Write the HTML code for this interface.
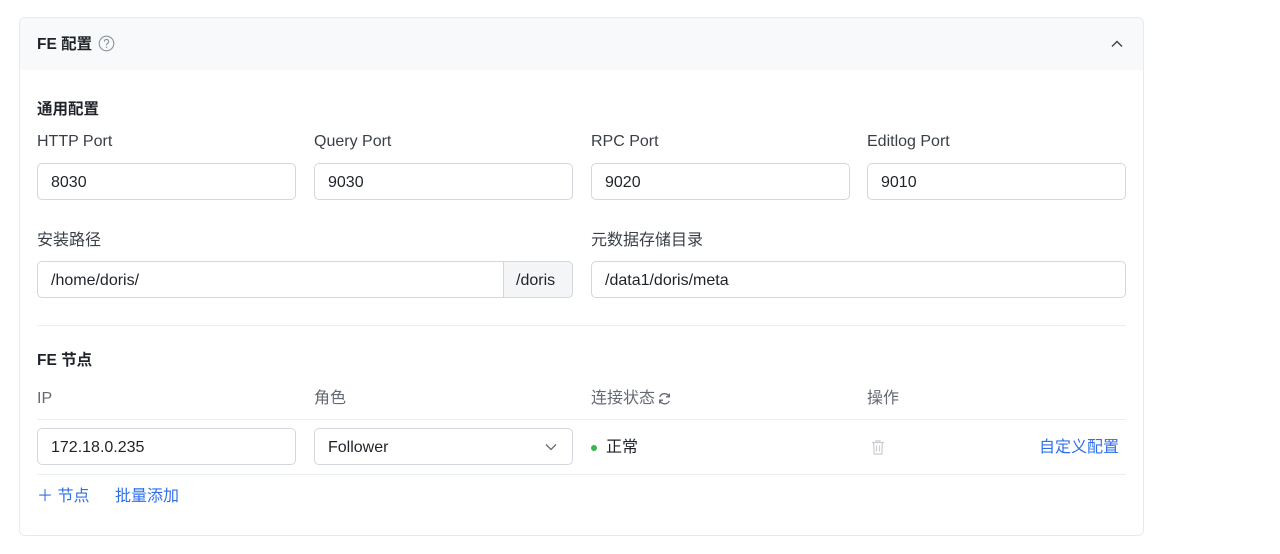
<!DOCTYPE html><html><head><meta charset="utf-8"><style>
*{box-sizing:border-box;margin:0;padding:0}
body{width:1280px;height:554px;background:#fff;font-family:"Liberation Sans","Noto Sans CJK SC",sans-serif;color:#1f2329;position:relative;overflow:hidden}
.a{position:absolute;line-height:20px}
.card{left:19px;top:17px;width:1125px;height:519px;border:1px solid #e8eaee;border-radius:6px;overflow:hidden}
.hd{left:0;top:0;width:100%;height:52px;background:#f8f9fb}
.t{font-size:15.5px;font-weight:bold;color:#1f2329}
.lb{font-size:16px;color:#3a3f47}
.in{height:37px;border:1px solid #d3d7de;border-radius:5px;font-size:16px;padding-left:13px;line-height:37px;color:#1f2329;background:#fff}
.ln{height:1px;background:#eceef2}
.blue{color:#2f6fed;font-size:16px}
</style></head><body>
<div class="a card">
<div class="a hd"></div>
</div>
<div class="a t" style="left:37px;top:35px">FE 配置</div>
<svg class="a" style="left:98px;top:35px" width="17" height="17" viewBox="0 0 17 17"><circle cx="8.5" cy="8.5" r="7.3" fill="none" stroke="#8a919c" stroke-width="1.1"/><path d="M6.4 6.6a2.1 2.1 0 1 1 2.9 1.9c-.6.3-.8.7-.8 1.3v.6" fill="none" stroke="#8a919c" stroke-width="1.1"/><circle cx="8.5" cy="12.3" r=".7" fill="#8a919c"/></svg>
<svg class="a" style="left:1110px;top:38px" width="14" height="12" viewBox="0 0 14 12"><path d="M2 8.5l5-5 5 5" fill="none" stroke="#3a3f47" stroke-width="1.4"/></svg>
<div class="a t" style="left:37px;top:100px">通用配置</div>
<div class="a lb" style="left:37px;top:132px">HTTP Port</div>
<div class="a lb" style="left:314px;top:132px">Query Port</div>
<div class="a lb" style="left:591px;top:132px">RPC Port</div>
<div class="a lb" style="left:867px;top:132px">Editlog Port</div>
<div class="a in" style="left:37px;top:163px;width:259px">8030</div>
<div class="a in" style="left:314px;top:163px;width:259px">9030</div>
<div class="a in" style="left:591px;top:163px;width:259px">9020</div>
<div class="a in" style="left:867px;top:163px;width:259px">9010</div>
<div class="a lb" style="left:37px;top:231px">安装路径</div>
<div class="a lb" style="left:591px;top:231px">元数据存储目录</div>
<div class="a in" style="left:37px;top:261px;width:536px">/home/doris/</div>
<div class="a in" style="left:503px;top:261px;width:70px;background:#f4f5f7;border-radius:0 5px 5px 0;padding-left:12px">/doris</div>
<div class="a in" style="left:591px;top:261px;width:535px">/data1/doris/meta</div>
<div class="a ln" style="left:37px;top:325px;width:1089px"></div>
<div class="a t" style="left:37px;top:351px">FE 节点</div>
<div class="a lb" style="left:37px;top:389px;color:#646a73">IP</div>
<div class="a lb" style="left:314px;top:389px;color:#646a73">角色</div>
<div class="a lb" style="left:591px;top:389px;color:#646a73">连接状态</div>
<svg class="a" style="left:657px;top:391px" width="15" height="15" viewBox="0 0 15 15"><path d="M12 5.5A5 5 0 0 0 2.8 6M3 9.5a5 5 0 0 0 9.2.5" fill="none" stroke="#646a73" stroke-width="1.3"/><path d="M12.3 2.5v3.3H9M2.7 12.5V9.2H6" fill="none" stroke="#646a73" stroke-width="1.3"/></svg>
<div class="a lb" style="left:867px;top:389px;color:#646a73">操作</div>
<div class="a ln" style="left:37px;top:419px;width:1089px"></div>
<div class="a in" style="left:37px;top:428px;width:259px">172.18.0.235</div>
<div class="a in" style="left:314px;top:428px;width:259px">Follower</div>
<svg class="a" style="left:544px;top:441px" width="14" height="12" viewBox="0 0 14 12"><path d="M2 3.5l5 5 5-5" fill="none" stroke="#646a73" stroke-width="1.3"/></svg>
<div class="a" style="left:591px;top:445px;width:6px;height:6px;border-radius:50%;background:#3fb34f"></div>
<div class="a" style="left:606px;top:438px;font-size:16px">正常</div>
<svg class="a" style="left:870px;top:439px" width="16" height="17" viewBox="0 0 16 17"><path d="M2 3.5h12M6 3.5V1.8h4v1.7M3.5 3.5l.7 11.5h7.6l.7-11.5M6.5 6.5v6M9.5 6.5v6" fill="none" stroke="#c9cdd4" stroke-width="1.2"/></svg>
<div class="a blue" style="left:1039px;top:438px">自定义配置</div>
<div class="a ln" style="left:37px;top:474px;width:1089px"></div>
<div class="a blue" style="left:37px;top:487px">＋ 节点</div>
<div class="a blue" style="left:115px;top:487px">批量添加</div>
</body></html>
